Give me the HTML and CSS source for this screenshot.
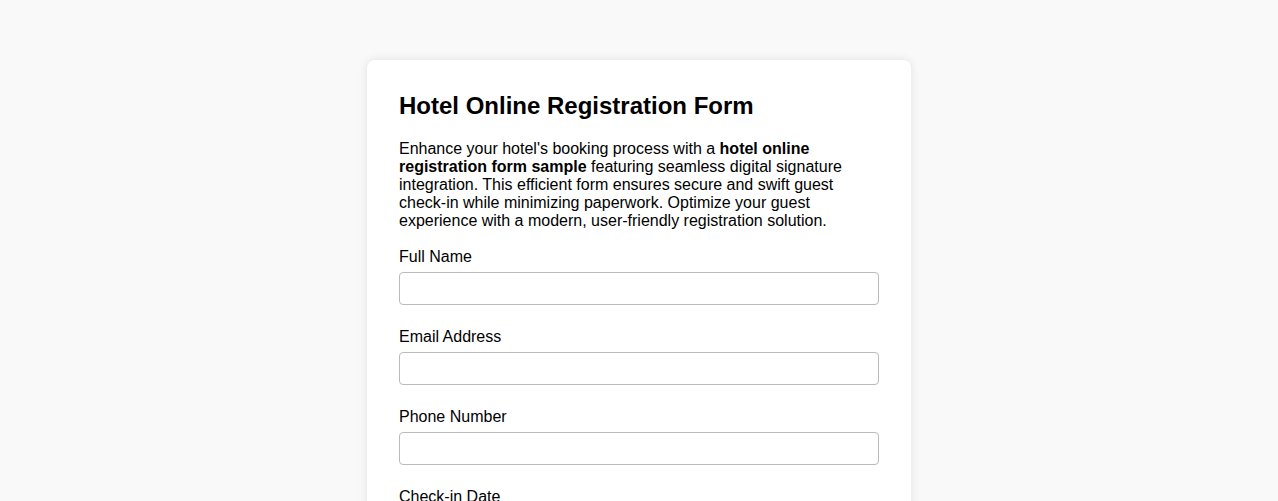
FILE: index.html
```html
<!DOCTYPE html>
<html lang="en">
<head>
<meta charset="utf-8">
<title>Hotel Online Registration Form</title>
<link rel="stylesheet" href="styles.css">
</head>
<body>
<div class="card">
  <h1 class="title">Hotel Online Registration Form</h1>
  <p class="intro">Enhance your hotel's booking process with a <strong>hotel online registration form sample</strong> featuring seamless digital signature integration. This efficient form ensures secure and swift guest check-in while minimizing paperwork. Optimize your guest experience with a modern, user-friendly registration solution.</p>
  <form class="form">
    <div class="field">
      <label class="label" for="name">Full Name</label>
      <input class="input" id="name" type="text">
    </div>
    <div class="field">
      <label class="label" for="email">Email Address</label>
      <input class="input" id="email" type="email">
    </div>
    <div class="field">
      <label class="label" for="phone">Phone Number</label>
      <input class="input" id="phone" type="tel">
    </div>
    <div class="field">
      <label class="label" for="checkin">Check-in Date</label>
      <input class="input" id="checkin" type="text">
    </div>
  </form>
</div>
</body>
</html>
```
FILE: styles.css
```css
* { box-sizing: border-box; }
html, body {
  margin: 0;
  padding: 0;
  background: #f9f9f9;
}
body {
  font-family: "Liberation Sans", Arial, sans-serif;
  font-size: 16px;
  color: #000;
  padding-top: 60px;
}
.card {
  width: 544px;
  margin: 0 auto;
  background: #fff;
  border-radius: 8px;
  box-shadow: 0 0 10px rgba(0, 0, 0, 0.1);
  padding: 32px;
}
.title {
  margin: 0 0 20px;
  font-size: 24px;
  font-weight: bold;
}
.intro {
  margin: 0 0 18px;
}
.field {
  margin-bottom: 23px;
}
.label {
  display: block;
  margin-bottom: 6px;
}
.input {
  display: block;
  width: 100%;
  height: 33px;
  border: 1px solid #bbb;
  border-radius: 4px;
  background: #fff;
  font-family: inherit;
  font-size: 16px;
  padding: 0 8px;
}
```
